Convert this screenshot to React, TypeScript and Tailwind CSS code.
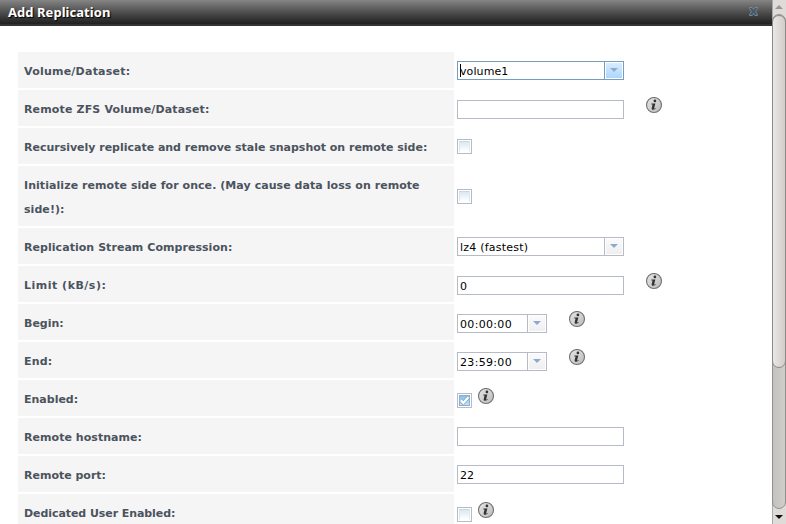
import React from "react";

type Kind = "text" | "combo" | "time" | "check";

interface Field {
  label: string;
  kind: Kind;
  value?: string;
  focused?: boolean;
  checked?: boolean;
  info?: boolean;
  height?: string;
  offset: string;
  tracking?: string;
  valueTracking?: string;
}

const fields: Field[] = [
  { label: "Volume/Dataset:", kind: "combo", value: "volume1", focused: true, offset: "mt-[9px]", tracking: "tracking-[0.23px]", valueTracking: "tracking-[0.1px]" },
  { label: "Remote ZFS Volume/Dataset:", kind: "text", value: "", info: true, offset: "mt-[10px]", tracking: "tracking-[0.15px]" },
  { label: "Recursively replicate and remove stale snapshot on remote side:", kind: "check", offset: "mt-[11px]", tracking: "tracking-[-0.015px]" },
  {
    label: "Initialize remote side for once. (May cause data loss on remote side!):",
    kind: "check",
    height: "h-[60px]",
    offset: "mt-[23px]",
    tracking: "tracking-[0.06px]",
  },
  { label: "Replication Stream Compression:", kind: "combo", value: "lz4 (fastest)", offset: "mt-[9px]", tracking: "tracking-[0.05px]", valueTracking: "tracking-[0.22px]" },
  { label: "Limit (kB/s):", kind: "text", value: "0", info: true, offset: "mt-[10px]", tracking: "tracking-[0.5px]" },
  { label: "Begin:", kind: "time", value: "00:00:00", info: true, offset: "mt-[10px]", valueTracking: "tracking-[0.32px]" },
  { label: "End:", kind: "time", value: "23:59:00", info: true, offset: "mt-[10px]", tracking: "tracking-[0.2px]", valueTracking: "tracking-[0.32px]" },
  { label: "Enabled:", kind: "check", checked: true, info: true, offset: "mt-[13px]" },
  { label: "Remote hostname:", kind: "text", value: "", offset: "mt-[9px]", tracking: "tracking-[0.05px]" },
  { label: "Remote port:", kind: "text", value: "22", offset: "mt-[9px]" },
  { label: "Dedicated User Enabled:", kind: "check", info: true, offset: "mt-[13px]", tracking: "tracking-[-0.07px]" },
];

function InfoIcon() {
  return (
    <svg width="18" height="17" viewBox="0 0 18 17" className="block">
      <defs>
        <linearGradient id="info" x1="0" y1="0" x2="1" y2="1">
          <stop offset="0" stopColor="#e4e4e4" />
          <stop offset="0.5" stopColor="#d2d2d2" />
          <stop offset="1" stopColor="#b8b8b8" />
        </linearGradient>
      </defs>
      <circle cx="9" cy="8" r="7.5" fill="url(#info)" stroke="#707070" strokeWidth="1.1" />
      <circle cx="9.9" cy="3.9" r="1.35" fill="#333" />
      <path d="M6.4 6.4H10.4L9.1 11.2Q9.1 11.9 10.6 10.9L10.8 11.6Q9 13 7.4 12.8Q6.3 12.4 6.7 11L7.6 7.6L6.3 7.4Z" fill="#333" />
    </svg>
  );
}

function Checkbox({ checked }: { checked?: boolean }) {
  return (
    <div className="h-[15px] w-[15px] border border-[#b5bcc7] bg-white p-px">
      <div
        className={
          checked
            ? "h-[11px] w-[11px] border border-[#8db0ce] bg-linear-to-b from-[#8dbde6] to-[#c0e0f8]"
            : "h-[11px] w-[11px] border border-t-[#c8d9e4] border-r-[#e0e9f0] border-b-white border-l-[#dae5ed] bg-linear-to-b from-[#d8e8f1] to-white"
        }
      >
        {checked && (
          <svg width="9" height="9" viewBox="0 0 9 9" className="block overflow-visible">
            <path d="M.8 4.2L3.3 6.9L8.4 1.2" fill="none" stroke="#6a9ac4" strokeWidth="3.6" />
            <path d="M.8 4.2L3.3 6.9L8.4 1.2" fill="none" stroke="#fff" strokeWidth="2.4" />
          </svg>
        )}
      </div>
    </div>
  );
}

function Box({ kind, value, focused, valueTracking }: Field) {
  return (
    <div
      className={`flex h-[19px] border bg-white ${focused ? "border-[#759dc0]" : "border-[#b5bcc7]"} ${
        kind === "time" ? "w-[90px]" : "w-[167px]"
      }`}
    >
      <div className="flex flex-1 items-start pl-[2px] text-[11px] leading-[17px] text-black">
        {focused && <span className="mt-[2px] -mr-px h-[13px] w-px bg-black" />}
        <span className={`pt-px whitespace-nowrap ${valueTracking ?? ""}`}>{value}</span>
      </div>
      {kind !== "text" && (
        <div className={`w-[19px] border-l p-px ${focused ? "border-[#759dc0]" : "border-[#b5bcc7]"}`}>
          <div
            className={`flex h-[15px] w-[16px] items-start justify-center pt-[5px] ${
              focused ? "bg-linear-to-b from-[#d9ecff] to-[#abd6ff]" : "bg-linear-to-b from-[#fafafa] to-[#efefef]"
            }`}
          >
            <svg width="8" height="4" viewBox="0 0 8 4">
              <path d="M0 0H8L4 4Z" fill={focused ? "#93a9ca" : "#8ca9cf"} />
            </svg>
          </div>
        </div>
      )}
    </div>
  );
}

function Row({ field }: { field: Field }) {
  const isCheck = field.kind === "check";
  return (
    <div className={`flex shrink-0 gap-[3px] ${field.height ?? "h-9"}`}>
      <div
        className={`w-[436px] bg-[#f5f5f5] px-1.5 pt-2 text-[11px] leading-6 font-bold text-[#4b535e] ${field.tracking ?? ""}`}
      >
        {field.label.includes("side!") ? (
          <>
            Initialize remote side for once. (May cause data loss on remote
            <br />
            side!):
          </>
        ) : (
          <span className="whitespace-nowrap">{field.label}</span>
        )}
      </div>
      <div className={`flex items-start ${isCheck ? "gap-[5px]" : "gap-[21px]"}`}>
        <div className={field.offset}>{isCheck ? <Checkbox checked={field.checked} /> : <Box {...field} />}</div>
        {field.info && (
          <div className={isCheck ? "mt-2" : "mt-[7px]"}>
            <InfoIcon />
          </div>
        )}
      </div>
    </div>
  );
}

function Scrollbar() {
  return (
    <div className="flex h-full w-[14px] flex-col bg-[#dedbd8] shadow-[inset_1px_0_#aaa7a4]">
      <div className="flex h-[14px] items-center justify-center">
        <svg width="8" height="4" viewBox="0 0 8 4">
          <path d="M4 0L8 4H0Z" fill="#999693" />
        </svg>
      </div>
      <div className="h-[495px] rounded-[7px] border border-[#92908d] bg-linear-to-r from-[#c4c2bf] to-[#d0cecb]">
        <div className="-mx-px h-[353px] rounded-[7px] border border-[#8d8a88] bg-linear-to-r from-[#eae7e5] to-[#d2cdca]" />
      </div>
      <div className="flex h-[15px] items-center justify-center">
        <svg width="8" height="4" viewBox="0 0 8 4">
          <path d="M0 0H8L4 4Z" fill="#111" />
        </svg>
      </div>
    </div>
  );
}

export default function App() {
  return (
    <div className="flex h-[524px] w-[786px] overflow-hidden bg-white font-['DejaVu_Sans',Verdana,sans-serif]">
      <div className="flex w-[772px] flex-col">
        <header className="flex h-[26px] shrink-0 items-start justify-between border-b-2 border-[#333] bg-linear-to-b from-[#858585] to-[#202020] pr-[14px] pl-2">
          <h1 className="pt-1 font-['Noto_Sans','Open_Sans',sans-serif] text-[13px] leading-4 font-bold tracking-[0.05px] text-white [text-shadow:1px_1px_1px_#000]">
            Add Replication
          </h1>
          <svg width="9" height="9" viewBox="0 0 9 9" className="mt-[7px]">
            <path d="M.5 .5H3.2L4.5 2.4L5.8 .5H8.5V1.6L6.6 4.5L8.5 7.4V8.5H5.8L4.5 6.6L3.2 8.5H.5V7.4L2.4 4.5L.5 1.6Z" fill="#435a6d" stroke="#87919a" strokeWidth=".8" />
          </svg>
        </header>
        <main className="flex min-h-0 flex-1 flex-col gap-[2px] overflow-hidden pt-[26px] pl-[18px]">
          {fields.map((field) => (
            <Row key={field.label} field={field} />
          ))}
        </main>
      </div>
      <Scrollbar />
    </div>
  );
}
